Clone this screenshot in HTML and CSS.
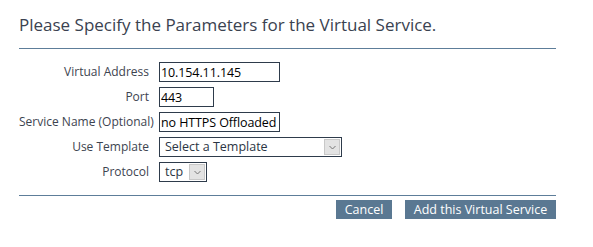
FILE: index.html
```html
<!DOCTYPE html>
<html>
<head>
<meta charset="utf-8">
<link rel="stylesheet" href="styles.css">
</head>
<body>
<div class="panel">
  <h2 class="title">Please Specify the Parameters for the Virtual Service.</h2>
  <form class="form">
    <label class="lbl">Virtual Address</label>
    <div class="ctl"><input class="txt w-addr" type="text" value="10.154.11.145"></div>
    <label class="lbl">Port</label>
    <div class="ctl"><input class="txt w-port" type="text" value="443"></div>
    <label class="lbl">Service Name (Optional)</label>
    <div class="ctl"><input class="txt w-addr focus" type="text" value="no HTTPS Offloaded"></div>
    <label class="lbl">Use Template</label>
    <div class="ctl">
      <div class="sel w-tpl"><span class="sel-text">Select a Template</span><span class="arrow"><svg width="7" height="5" viewBox="0 0 7 5"><path d="M0.5 1 L3.5 4 L6.5 1" fill="none" stroke="#777" stroke-width="1"/></svg></span></div>
    </div>
    <label class="lbl">Protocol</label>
    <div class="ctl">
      <div class="sel w-proto"><span class="sel-text">tcp</span><span class="arrow"><svg width="7" height="5" viewBox="0 0 7 5"><path d="M0.5 1 L3.5 4 L6.5 1" fill="none" stroke="#777" stroke-width="1"/></svg></span></div>
    </div>
  </form>
  <div class="actions">
    <button class="btn btn-cancel" type="button">Cancel</button>
    <button class="btn btn-add" type="button">Add this Virtual Service</button>
  </div>
</div>
</body>
</html>
```
FILE: styles.css
```css
html, body {
  margin: 0;
  padding: 0;
  background: #fff;
}
body {
  font-family: "Open Sans", "Noto Sans", sans-serif;
  color: #3d4450;
}
.panel {
  width: 537px;
  margin-left: 19px;
  padding-top: 13px;
}
.title {
  margin: 0;
  font-size: 17px;
  font-weight: normal;
  line-height: 24px;
  padding-bottom: 11px;
  border-bottom: 1px solid #5d7d99;
  color: #3a4250;
}
.form {
  display: grid;
  grid-template-columns: 130px auto;
  column-gap: 10px;
  row-gap: 5px;
  padding-top: 13px;
  padding-bottom: 13px;
  border-bottom: 1px solid #5d7d99;
  margin: 0;
}
.lbl {
  font-size: 12px;
  text-align: right;
  line-height: 20px;
  color: #3d4450;
  white-space: nowrap;
}
.ctl {
  display: flex;
  height: 20px;
}
.txt {
  box-sizing: border-box;
  height: 20px;
  margin: 0;
  padding: 0 1px;
  border: 1px solid #2e3b4b;
  font-family: "Open Sans", sans-serif;
  font-size: 12.5px;
  letter-spacing: -0.1px;
  color: #000;
  background: #fff;
  outline: none;
}
.w-addr { width: 121px; }
.w-port { width: 55px; }
.sel {
  box-sizing: border-box;
  height: 20px;
  border: 1px solid #2e3b4b;
  display: flex;
  align-items: center;
  justify-content: space-between;
  padding: 1px;
  background: #fff;
}
.w-tpl { width: 183px; }
.w-proto { width: 48px; }
.sel-text {
  font-size: 12.5px;
  color: #2b3544;
  padding-left: 4px;
  line-height: 16px;
}
.arrow {
  box-sizing: border-box;
  width: 16px;
  height: 16px;
  background: #e3e3e3;
  border: 1px solid #c8c8c8;
  display: flex;
  align-items: center;
  justify-content: center;
}
.actions {
  display: flex;
  justify-content: flex-end;
  gap: 13px;
  padding-top: 4px;
}
.btn {
  margin: 0;
  border: none;
  height: 19px;
  padding: 0;
  background: #5a7892;
  color: #fff;
  font-family: "Open Sans", sans-serif;
  font-size: 12.5px;
  line-height: 19px;
  text-align: center;
}
.btn-cancel { width: 56px; }
.btn-add { width: 151px; }
```
